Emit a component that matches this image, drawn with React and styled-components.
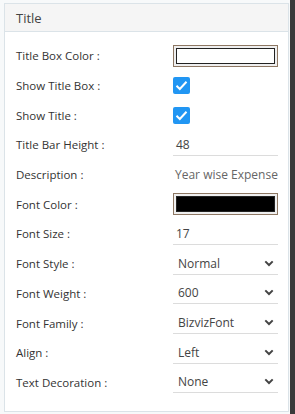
import React from "react";
import styled, { createGlobalStyle } from "styled-components";

const Global = createGlobalStyle`
  html, body { margin: 0; padding: 0; background: #f7f9fa; }
  body { font-family: "Open Sans", "Noto Sans", sans-serif; }
  * { box-sizing: border-box; }
`;

const Shell = styled.div`
  display: flex;
  width: 295px;
  height: 414px;
`;

const Panel = styled.div`
  flex: 1;
  margin: 3px 0 2px 4px;
  background: #fff;
  border: 1px solid #dbe3e8;
  display: flex;
  flex-direction: column;
`;

const ScrollBar = styled.div`
  width: 6px;
  margin-left: 1px;
  background: #3a3a3a;
`;

const Header = styled.div`
  height: 28px;
  background: #f5f5f5;
  border-bottom: 1px solid #dbe3e8;
  display: flex;
  align-items: center;
  padding-left: 11px;
  font-size: 13px;
  color: #444;
`;

const Body = styled.div`
  padding: 9px 10px 0 11px;
  display: flex;
  flex-direction: column;
`;

const Row = styled.div`
  display: grid;
  grid-template-columns: 157px 105px;
  align-items: center;
  height: 29.7px;
`;

const Label = styled.div`
  font-size: 11.5px;
  color: #333;
  white-space: nowrap;
`;

const ColorBox = styled.div`
  height: 22px;
  border: 1px solid #8d7763;
  background: #efefef;
  padding: 2px;
  display: flex;
`;

const Swatch = styled.div`
  flex: 1;
  border: 1px solid #222;
  background: ${(p) => p.$color};
`;

const Check = styled.div`
  width: 17px;
  height: 17px;
  border-radius: 2px;
  background: #2196f3;
  display: flex;
  align-items: center;
  justify-content: center;
`;

const Field = styled.div`
  height: 22px;
  border-bottom: 1px solid ${(p) => (p.$line ? "#dcdcdc" : "transparent")};
  display: flex;
  align-items: center;
  justify-content: space-between;
  padding: 0 ${(p) => (p.$line ? 4 : 0)}px 0 ${(p) => p.$pad || 3}px;
  font-size: 12px;
  color: ${(p) => p.$color || "#444"};
  white-space: nowrap;
  overflow: hidden;
`;

const Chevron = () => (
  <svg width="10" height="7" viewBox="0 0 10 7">
    <path d="M1.3 1.4 L5 5 L8.7 1.4" stroke="#444" strokeWidth="2" fill="none" />
  </svg>
);

const Tick = () => (
  <svg width="13" height="11" viewBox="0 0 13 11">
    <path d="M1.5 5.8 L4.8 9 L11.5 1.8" stroke="#fff" strokeWidth="2" fill="none" />
  </svg>
);

const rows = [
  { label: "Title Box Color :", type: "color", color: "#fff" },
  { label: "Show Title Box :", type: "check" },
  { label: "Show Title :", type: "check" },
  { label: "Title Bar Height :", type: "text", value: "48" },
  { label: "Description :", type: "desc", value: "Year wise Expense" },
  { label: "Font Color :", type: "color", color: "#000" },
  { label: "Font Size :", type: "text", value: "17" },
  { label: "Font Style :", type: "select", value: "Normal" },
  { label: "Font Weight :", type: "select", value: "600" },
  { label: "Font Family :", type: "select", value: "BizvizFont" },
  { label: "Align :", type: "select", value: "Left" },
  { label: "Text Decoration :", type: "select", value: "None" },
];

function Control({ r }) {
  if (r.type === "color")
    return (
      <ColorBox>
        <Swatch $color={r.color} />
      </ColorBox>
    );
  if (r.type === "check")
    return (
      <Check>
        <Tick />
      </Check>
    );
  if (r.type === "text")
    return <Field $line>{r.value}</Field>;
  if (r.type === "desc")
    return (
      <Field $color="#666" $pad={2}>
        {r.value}
      </Field>
    );
  return (
    <Field $line $pad={5}>
      <span>{r.value}</span>
      <Chevron />
    </Field>
  );
}

export default function App() {
  return (
    <>
      <Global />
      <Shell>
        <Panel>
          <Header>Title</Header>
          <Body>
            {rows.map((r) => (
              <Row key={r.label}>
                <Label>{r.label}</Label>
                <Control r={r} />
              </Row>
            ))}
          </Body>
        </Panel>
        <ScrollBar />
      </Shell>
    </>
  );
}
